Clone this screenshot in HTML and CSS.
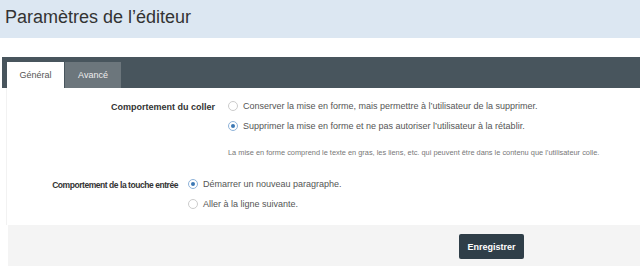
FILE: index.html
```html
<html>
<head>
    <title>Paramètres de l'éditeur</title>
    <link rel="stylesheet" href="styles.css">
</head>
<body>
    <div class="entete"><h1>Paramètres de l’éditeur</h1></div>

    <section class="panneau">
        <div class="onglets">
            <span class="onglet actif">Général</span>
            <span class="onglet">Avancé</span>
        </div>

        <div class="contenu">
            <div class="groupe coller">
                <div class="libelle">Comportement du coller</div>
                <div class="choix">
                    <label class="option"><span class="radio"></span>Conserver la mise en forme, mais permettre à l’utilisateur de la supprimer.</label>
                    <label class="option"><span class="radio coche"></span>Supprimer la mise en forme et ne pas autoriser l’utilisateur à la rétablir.</label>
                    <p class="aide">La mise en forme comprend le texte en gras, les liens, etc. qui peuvent être dans le contenu que l’utilisateur colle.</p>
                </div>
            </div>

            <div class="groupe entree">
                <div class="libelle">Comportement de la touche entrée</div>
                <div class="choix">
                    <label class="option"><span class="radio coche"></span>Démarrer un nouveau paragraphe.</label>
                    <label class="option"><span class="radio"></span>Aller à la ligne suivante.</label>
                </div>
            </div>
        </div>

        <div class="pied"><button class="enregistrer">Enregistrer</button></div>
    </section>
</body>
</html>
```

FILE: styles.css
```css
* {
    font-family: "Liberation Sans", Arial, sans-serif;
    box-sizing: border-box;
}
body {
    margin: 0;
    background-color: white;
}
.entete {
    background-color: #dce7f2;
    height: 38px;
    padding: 7px 5px 0 5px;
}
h1 {
    margin: 0;
    font-size: 18px;
    font-weight: normal;
    color: #333;
}
.panneau {
    margin-top: 19px;
    margin-left: 2px;
}
.onglets {
    background-color: #48555d;
    height: 31px;
    padding: 5px 0 0 5px;
    display: flex;
}
.onglet {
    width: 56px;
    height: 26px;
    background-color: #6c767c;
    color: #eee;
    font-size: 9px;
    display: flex;
    align-items: center;
    justify-content: center;
    margin-right: 1px;
}
.onglet.actif {
    width: 57px;
    background-color: white;
    color: #555;
}
.contenu {
    margin-left: 4px;
    background-color: white;
    padding: 12px 0 7px 0;
    border-left: 1px solid #f2f2f2;
}
.groupe {
    display: flex;
}
.libelle {
    font-size: 9px;
    font-weight: bold;
    color: #333;
    text-align: right;
    padding-top: 2px;
}
.coller .libelle {
    width: 208px;
    margin-right: 13px;
}
.entree .libelle {
    width: 171px;
    margin-right: 10px;
    font-size: 8.5px;
    letter-spacing: -0.45px;
    padding-top: 2px;
}
.entree {
    margin-top: 21px;
}
.option {
    display: flex;
    align-items: center;
    font-size: 9px;
    color: #555;
    height: 12px;
    margin-bottom: 8px;
}
.radio {
    width: 10px;
    height: 10px;
    border: 1px solid #ccc;
    border-radius: 50%;
    margin-right: 5px;
    background-color: white;
    position: relative;
}
.radio.coche {
    border-color: #8fb3d9;
}
.radio.coche::after {
    content: "";
    position: absolute;
    left: 2px;
    top: 2px;
    width: 4px;
    height: 4px;
    border-radius: 50%;
    background-color: #3c78b4;
}
.aide {
    margin: 16px 0 0 0;
    font-size: 7.4px;
    color: #777;
}
.pied {
    margin-left: 6px;
    background-color: #f4f4f4;
    height: 41px;
    padding: 9px 0 0 451px;
}
.enregistrer {
    background-color: #2f3e48;
    color: white;
    border: 0;
    border-radius: 2px;
    width: 65px;
    height: 25px;
    font-size: 9px;
    font-weight: bold;
}
```
